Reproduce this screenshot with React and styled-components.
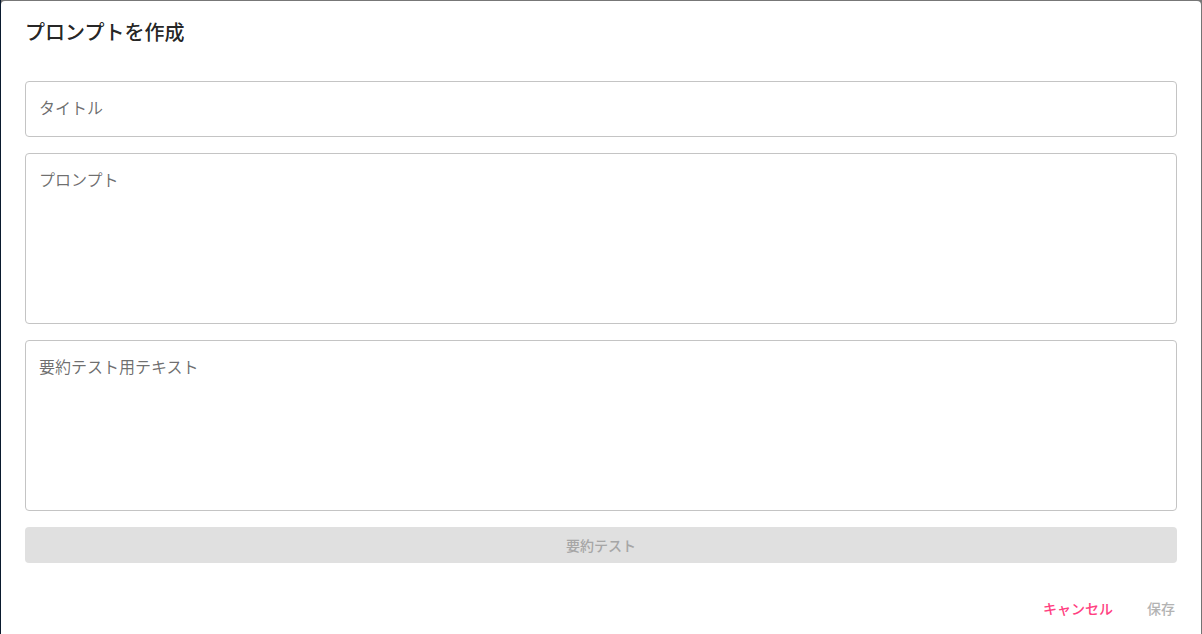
import React from "react";
import styled, { createGlobalStyle } from "styled-components";

const GlobalStyle = createGlobalStyle`
  html, body {
    margin: 0;
    height: 100%;
    overflow: hidden;
  }
  body {
    background: linear-gradient(to right, #0b1b30 0, #0b1b30 1px, #777 1px);
    font-family: Roboto, "Noto Sans CJK JP", sans-serif;
  }
  #root {
    height: 100%;
  }
`;

const Backdrop = styled.div`
  height: 100%;
  padding: 1px 1px 0 1px;
  box-sizing: border-box;
  display: flex;
`;

const Dialog = styled.div`
  flex: 1;
  background: #fff;
  border-radius: 4px 4px 0 0;
  display: flex;
  flex-direction: column;
  box-shadow: 0 11px 15px -7px rgba(0, 0, 0, 0.2);
`;

const Title = styled.h2`
  margin: 0;
  padding: 16px 24px;
  font-size: 20px;
  font-weight: 500;
  line-height: 32px;
  color: rgba(0, 0, 0, 0.87);
`;

const Content = styled.div`
  padding: 16px 24px 19px;
  display: flex;
  flex-direction: column;
  gap: 16px;
`;

const fieldBase = `
  box-sizing: border-box;
  width: 100%;
  border: 1px solid #c4c4c4;
  border-radius: 4px;
  padding: 15px 13px 17px;
  font-family: Roboto, "Noto Sans CJK JP", sans-serif;
  font-size: 16px;
  line-height: 23px;
  color: rgba(0, 0, 0, 0.87);
  background: #fff;
  outline: none;
  margin: 0;
  &::placeholder {
    color: rgba(0, 0, 0, 0.58);
    opacity: 1;
  }
`;

const TextInput = styled.input`
  ${fieldBase}
  height: 56px;
  display: block;
`;

const TextArea = styled.textarea`
  ${fieldBase}
  height: ${(p) => p.$height}px;
  resize: none;
  display: block;
`;

const WideButton = styled.button`
  height: 36px;
  border: none;
  border-radius: 4px;
  background: #e0e0e0;
  color: #a6a6a6;
  font-family: Roboto, "Noto Sans CJK JP", sans-serif;
  font-size: 14px;
  font-weight: 500;
  cursor: default;
`;

const Actions = styled.div`
  display: flex;
  justify-content: flex-end;
  align-items: center;
  gap: 8px;
  padding: 8px;
`;

const TextButton = styled.button`
  min-width: 64px;
  height: 36px;
  padding: 6px 8px;
  border: none;
  background: transparent;
  font-family: Roboto, "Noto Sans CJK JP", sans-serif;
  font-size: 14px;
  font-weight: 500;
  color: ${(p) => (p.disabled ? "#b3b3b3" : "#ff4081")};
  cursor: ${(p) => (p.disabled ? "default" : "pointer")};
`;

const App = () => {
  return (
    <>
      <GlobalStyle />
      <Backdrop>
        <Dialog>
          <Title>プロンプトを作成</Title>
          <Content>
            <TextInput placeholder="タイトル" />
            <TextArea $height={171} placeholder="プロンプト" />
            <TextArea $height={171} placeholder="要約テスト用テキスト" />
            <WideButton disabled>要約テスト</WideButton>
          </Content>
          <Actions>
            <TextButton>キャンセル</TextButton>
            <TextButton disabled>保存</TextButton>
          </Actions>
        </Dialog>
      </Backdrop>
    </>
  );
};

export default App;
